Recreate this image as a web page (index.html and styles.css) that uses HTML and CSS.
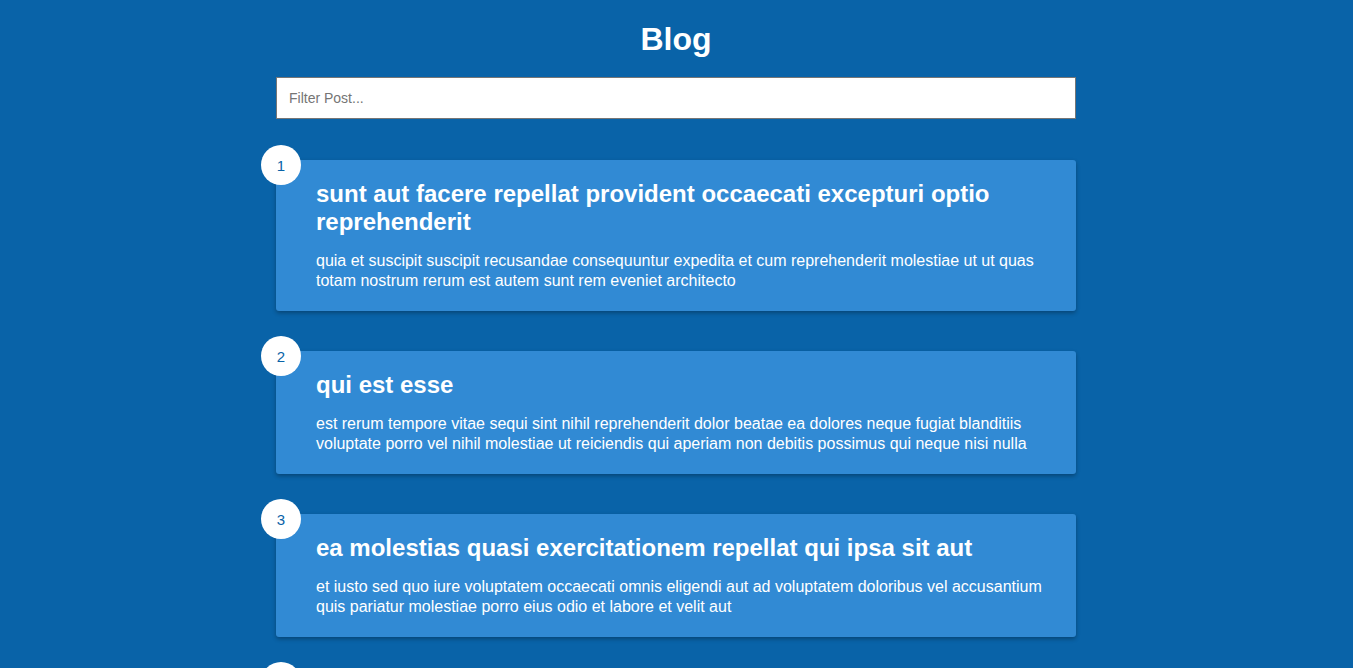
FILE: index.html
```html
<!DOCTYPE html>
<html lang="en">
<head>
<meta charset="UTF-8">
<title>Blog</title>
<link rel="stylesheet" href="styles.css">
</head>
<body>
  <h1 class="page-title">Blog</h1>
  <div class="filter-container">
    <input type="text" class="filter" placeholder="Filter Post...">
  </div>
  <div class="posts">
    <div class="post">
      <div class="number">1</div>
      <div class="post-info">
        <h2 class="post-title">sunt aut facere repellat provident occaecati excepturi optio reprehenderit</h2>
        <p class="post-body">quia et suscipit suscipit recusandae consequuntur expedita et cum reprehenderit molestiae ut ut quas totam nostrum rerum est autem sunt rem eveniet architecto</p>
      </div>
    </div>
    <div class="post">
      <div class="number">2</div>
      <div class="post-info">
        <h2 class="post-title">qui est esse</h2>
        <p class="post-body">est rerum tempore vitae sequi sint nihil reprehenderit dolor beatae ea dolores neque fugiat blanditiis voluptate porro vel nihil molestiae ut reiciendis qui aperiam non debitis possimus qui neque nisi nulla</p>
      </div>
    </div>
    <div class="post">
      <div class="number">3</div>
      <div class="post-info">
        <h2 class="post-title">ea molestias quasi exercitationem repellat qui ipsa sit aut</h2>
        <p class="post-body">et iusto sed quo iure voluptatem occaecati omnis eligendi aut ad voluptatem doloribus vel accusantium quis pariatur molestiae porro eius odio et labore et velit aut</p>
      </div>
    </div>
    <div class="post">
      <div class="number">4</div>
      <div class="post-info">
        <h2 class="post-title">eum et est occaecati</h2>
        <p class="post-body">ullam et saepe reiciendis voluptatem adipisci sit amet autem assumenda provident rerum culpa quis hic commodi nesciunt rem tenetur doloremque ipsam iure quis sunt voluptatem rerum illo velit</p>
      </div>
    </div>
  </div>
</body>
</html>
```

FILE: styles.css
```css
* {
  box-sizing: border-box;
}

body {
  margin: 0;
  background-color: #0963a8;
  color: #fff;
  font-family: "Liberation Sans", Arial, sans-serif;
  display: flex;
  flex-direction: column;
  align-items: center;
  padding: 0 1px 100px 0;
}

.page-title {
  font-size: 32px;
  font-weight: bold;
  margin: 21px 0 0;
  text-align: center;
}

.filter-container {
  margin-top: 19px;
  width: 800px;
}

.filter {
  display: block;
  width: 100%;
  height: 42px;
  padding: 0 12px;
  font-family: "Liberation Sans", Arial, sans-serif;
  font-size: 14px;
  border: 1px solid #767676;
  background: #fff;
  color: #333;
  outline: none;
}

.filter::placeholder {
  color: #757575;
}

.posts {
  margin-top: 41px;
  display: flex;
  flex-direction: column;
  gap: 40px;
  width: 800px;
}

.post {
  position: relative;
  display: flex;
  background-color: #318ad4;
  border-radius: 3px;
  box-shadow: 0 2px 4px rgba(0, 0, 0, 0.3);
  padding: 20px;
}

.post-info {
  margin-left: 20px;
}

.post-title {
  margin: 0;
  font-size: 24px;
  font-weight: bold;
  line-height: 28px;
}

.post-body {
  margin: 15px 0 0;
  font-size: 16px;
  line-height: 20px;
}

.number {
  position: absolute;
  top: -15px;
  left: -15px;
  width: 40px;
  height: 40px;
  border-radius: 50%;
  background: #fff;
  color: #0963a8;
  font-size: 15px;
  display: flex;
  align-items: center;
  justify-content: center;
}
```
